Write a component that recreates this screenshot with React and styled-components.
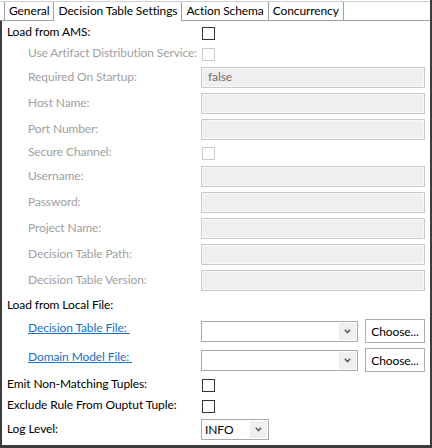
import React from 'react';
import styled, { createGlobalStyle } from 'styled-components';

const GlobalStyle = createGlobalStyle`
    html, body {
        margin: 0;
        padding: 0;
        background: #ffffff;
    }
    body {
        font-family: Lato, "Liberation Sans", sans-serif;
        font-size: 12px;
        letter-spacing: -0.1px;
        color: #000000;
    }
`;

const Window = styled.div`
    width: 432px;
    height: 448px;
    box-sizing: border-box;
    border-right: 2px solid #3c3c3c;
    background: #ffffff;
    display: flex;
    flex-direction: column;
`;

const TabStrip = styled.div`
    display: flex;
    margin-top: 1px;
    padding-left: 4px;
    border-top: 1px solid #d0d0d0;
    border-bottom: 1px solid #a0a0a0;
    box-sizing: border-box;
    height: 20px;
`;

const Tab = styled.div`
    display: flex;
    align-items: center;
    padding: 0 4px 1px 4px;
    border-right: 1px solid #a0a0a0;
    border-left: ${(p) => (p.$first ? '1px solid #a0a0a0' : 'none')};
    margin-bottom: ${(p) => (p.$active ? '-1px' : '0')};
    background: #ffffff;
    white-space: nowrap;
    line-height: 16px;
`;

const Body = styled.div`
    flex: 1;
    border-left: 2px solid #3c3c3c;
    border-bottom: 3px solid #3c3c3c;
    padding: 4px 3px 0 5px;
    display: grid;
    grid-template-columns: 194px 224px;
    grid-auto-rows: auto;
    row-gap: 5px;
    align-content: start;
    align-items: center;
`;

const Label = styled.div`
    line-height: 14px;
    padding-bottom: 2px;
    white-space: nowrap;
    padding-left: ${(p) => (p.$indent ? '21px' : '0')};
    color: ${(p) => (p.$disabled ? '#a0a0a0' : '#000000')};
`;

const LinkLabel = styled.a`
    line-height: 16px;
    padding-bottom: 6px;
    margin-left: 21px;
    justify-self: start;
    white-space: pre;
    color: #1a6ec6;
    text-decoration: underline;
    cursor: pointer;
`;

const Section = styled.div`
    grid-column: 1 / span 2;
    line-height: 14px;
    padding-bottom: 2px;
    margin-top: 2px;
`;

const Check = styled.span`
    display: block;
    width: 13px;
    height: 13px;
    box-sizing: border-box;
    margin-left: 1px;
    background: #ffffff;
    border: 1px solid ${(p) => (p.$disabled ? '#cccccc' : '#333333')};
`;

const TextField = styled.div`
    height: 21px;
    box-sizing: border-box;
    border: 1px solid #c9c9c9;
    box-shadow: inset 0 0 0 1px #f7f7f7;
    background: #efefef;
    color: #6d6d6d;
    padding-left: 6px;
    line-height: 18px;
`;

const FileRow = styled.div`
    display: flex;
    align-items: center;
    gap: 7px;
`;

const Combo = styled.div`
    width: ${(p) => p.$width}px;
    height: 21px;
    box-sizing: border-box;
    border: 1px solid #a9a9a9;
    background: #ffffff;
    display: flex;
    align-items: stretch;
`;

const ComboText = styled.span`
    flex: 1;
    padding-left: 3px;
    line-height: 19px;
`;

const ComboArrow = styled.span`
    width: 17px;
    margin: 1px;
    background: #efefef;
    display: flex;
    align-items: center;
    justify-content: center;
`;

const Button = styled.button`
    width: 60px;
    height: 24px;
    box-sizing: border-box;
    border: 1px solid #adadad;
    background: #ffffff;
    font-family: inherit;
    font-size: 12px;
    letter-spacing: inherit;
    color: #000000;
    padding: 0;
    box-shadow: inset 0 0 0 1px #ffffff;
`;

const Chevron = () => (
    <svg width="7" height="5" viewBox="0 0 7 5">
        <polyline points="0.8,0.8 3.5,3.6 6.2,0.8" fill="none" stroke="#5a5a5a" strokeWidth="1.5" />
    </svg>
);

const amsFields = [
    { label: 'Use Artifact Distribution Service:', type: 'check' },
    { label: 'Required On Startup:', type: 'text', value: 'false' },
    { label: 'Host Name:', type: 'text' },
    { label: 'Port Number:', type: 'text' },
    { label: 'Secure Channel:', type: 'check' },
    { label: 'Username:', type: 'text' },
    { label: 'Password:', type: 'text' },
    { label: 'Project Name:', type: 'text' },
    { label: 'Decision Table Path:', type: 'text' },
    { label: 'Decision Table Version:', type: 'text' },
];

const App = () => {
    return (
        <>
            <GlobalStyle />
            <Window>
                <TabStrip>
                    <Tab $first>General</Tab>
                    <Tab $active>Decision Table Settings</Tab>
                    <Tab>Action Schema</Tab>
                    <Tab>Concurrency</Tab>
                </TabStrip>
                <Body>
                    <Label>Load from AMS:</Label>
                    <Check />

                    {amsFields.map((f) => (
                        <React.Fragment key={f.label}>
                            <Label $indent $disabled>{f.label}</Label>
                            {f.type === 'check' ? <Check $disabled /> : <TextField>{f.value}</TextField>}
                        </React.Fragment>
                    ))}

                    <Section>Load from Local File:</Section>

                    <LinkLabel>{'Decision Table File: '}</LinkLabel>
                    <FileRow>
                        <Combo $width={157}>
                            <ComboText />
                            <ComboArrow><Chevron /></ComboArrow>
                        </Combo>
                        <Button>Choose...</Button>
                    </FileRow>

                    <LinkLabel>{'Domain Model File: '}</LinkLabel>
                    <FileRow>
                        <Combo $width={157}>
                            <ComboText />
                            <ComboArrow><Chevron /></ComboArrow>
                        </Combo>
                        <Button>Choose...</Button>
                    </FileRow>

                    <Label>Emit Non-Matching Tuples:</Label>
                    <Check />

                    <Label>Exclude Rule From Ouptut Tuple:</Label>
                    <Check />

                    <Label>Log Level:</Label>
                    <Combo $width={68}>
                        <ComboText>INFO</ComboText>
                        <ComboArrow><Chevron /></ComboArrow>
                    </Combo>
                </Body>
            </Window>
        </>
    );
};

export default App;
